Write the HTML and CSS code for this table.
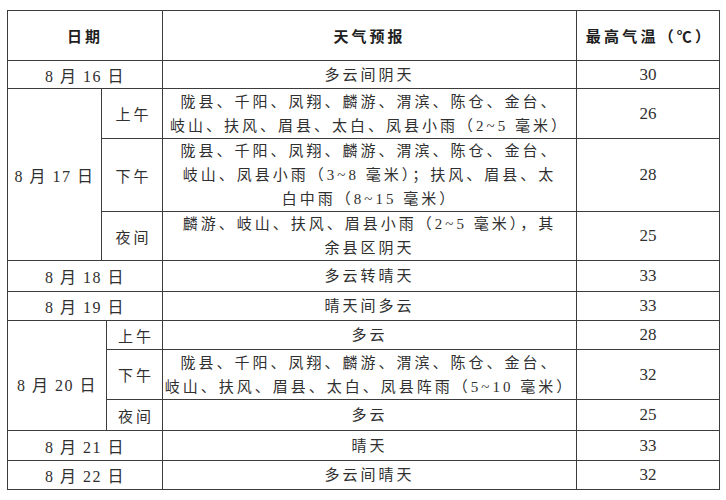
FILE: index.html
```html
<!DOCTYPE html>
<html lang="zh">
<head>
<meta charset="utf-8">
<link rel="stylesheet" href="styles.css">
</head>
<body>
<table class="wx">
  <colgroup>
    <col class="c-date">
    <col class="c-gap">
    <col class="c-sub">
    <col class="c-text">
    <col class="c-temp">
  </colgroup>
  <tr class="r-head">
    <th colspan="3">日期</th>
    <th>天气预报</th>
    <th class="th-temp">最高气温（℃）</th>
  </tr>
  <tr class="r28">
    <td colspan="3" class="date">8 月 16 日</td>
    <td class="fc">多云间阴天</td>
    <td class="num">30</td>
  </tr>
  <tr class="r50">
    <td rowspan="3" class="date">8 月 17 日</td>
    <td colspan="2" class="sub">上午</td>
    <td class="fc">陇县、千阳、凤翔、麟游、渭滨、陈仓、金台、<br>岐山、扶风、眉县、太白、凤县小雨（2~5 毫米）</td>
    <td class="num">26</td>
  </tr>
  <tr class="r73">
    <td colspan="2" class="sub">下午</td>
    <td class="fc">陇县、千阳、凤翔、麟游、渭滨、陈仓、金台、<br>岐山、凤县小雨（3~8 毫米）；扶风、眉县、太<br>白中雨（8~15 毫米）</td>
    <td class="num">28</td>
  </tr>
  <tr class="r49">
    <td colspan="2" class="sub">夜间</td>
    <td class="fc">麟游、岐山、扶风、眉县小雨（2~5 毫米），其<br>余县区阴天</td>
    <td class="num">25</td>
  </tr>
  <tr class="r31">
    <td colspan="3" class="date">8 月 18 日</td>
    <td class="fc">多云转晴天</td>
    <td class="num">33</td>
  </tr>
  <tr class="r29">
    <td colspan="3" class="date">8 月 19 日</td>
    <td class="fc">晴天间多云</td>
    <td class="num">33</td>
  </tr>
  <tr class="r29">
    <td rowspan="3" colspan="2" class="date date-low">8 月 20 日</td>
    <td class="sub">上午</td>
    <td class="fc">多云</td>
    <td class="num">28</td>
  </tr>
  <tr class="r50">
    <td class="sub">下午</td>
    <td class="fc">陇县、千阳、凤翔、麟游、渭滨、陈仓、金台、<br>岐山、扶风、眉县、太白、凤县阵雨（5~10 毫米）</td>
    <td class="num">32</td>
  </tr>
  <tr class="r31">
    <td class="sub">夜间</td>
    <td class="fc">多云</td>
    <td class="num">25</td>
  </tr>
  <tr class="r30">
    <td colspan="3" class="date">8 月 21 日</td>
    <td class="fc">晴天</td>
    <td class="num">33</td>
  </tr>
  <tr class="r29">
    <td colspan="3" class="date">8 月 22 日</td>
    <td class="fc">多云间晴天</td>
    <td class="num">32</td>
  </tr>
</table>
</body>
</html>
```
FILE: styles.css
```css
html, body {
  margin: 0;
  background: #ffffff;
}
body {
  padding: 10px 0 0 7px;
  font-family: "Liberation Serif", "Noto Sans CJK SC", serif;
  color: #303030;
}
.wx {
  border-collapse: collapse;
  table-layout: fixed;
  width: 712px;
}
.c-date { width: 94px; }
.c-gap { width: 5px; }
.c-sub { width: 56px; }
.c-text { width: 414px; }
.c-temp { width: 143px; }

.wx th, .wx td {
  border: 1px solid #3c3c3c;
  padding: 0;
  text-align: center;
  vertical-align: middle;
  white-space: nowrap;
  overflow: hidden;
}
.wx th {
  font-family: "Noto Sans CJK SC", sans-serif;
  font-weight: 700;
  font-size: 15px;
  letter-spacing: 3px;
  color: #1e1e1e;
}
.wx th.th-temp {
  letter-spacing: 3.2px;
  padding-left: 3px;
}
.r-head { height: 50px; }
.r28 { height: 28px; }
.r29 { height: 29px; }
.r30 { height: 30px; }
.r31 { height: 31px; }
.r49 { height: 49px; }
.r50 { height: 50px; }
.r73 { height: 73px; }

.date {
  font-size: 16px;
  letter-spacing: 1.5px;
}
.date-low {
  padding-top: 16px !important;
}
.sub {
  font-size: 15px;
  letter-spacing: 3px;
  padding-left: 3px !important;
}
.fc {
  font-size: 15px;
  letter-spacing: 3px;
  line-height: 24px;
}
.num {
  font-size: 17px;
}
```
